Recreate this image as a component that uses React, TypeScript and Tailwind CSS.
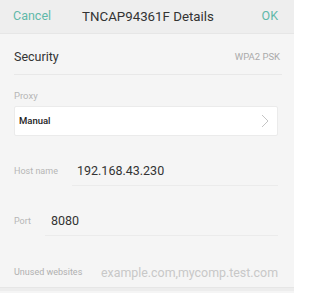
import React from "react";

export default function App() {
  return (
    <div className="w-[294px] h-[293px] overflow-hidden bg-[#f5f5f5] text-[#333]" style={{ fontFamily: "Roboto, 'Noto Sans', sans-serif" }}>
      <div className="h-[34px] bg-[#eeeeee] border-b border-[#e6e6e6] flex items-center pl-[13px] pr-[16px]">
        <span className="text-[12.5px] text-[#5fb9a9]">Cancel</span>
        <span className="text-[13.3px] text-[#333] ml-[31px]">TNCAP94361F Details</span>
        <span className="text-[12.5px] text-[#5fb9a9] ml-auto">OK</span>
      </div>
      <div className="px-[14px]">
        <div className="h-[41px] pt-[6px] flex items-center justify-between border-b border-[#e8e8e8] mr-[-2px]">
          <span className="text-[12.5px] text-[#333]">Security</span>
          <span className="text-[9.5px] text-[#aaaaaa] mr-[2px]">WPA2 PSK</span>
        </div>
        <div className="mt-[15px] text-[9.5px] leading-[12px] text-[#b5b5b5]">Proxy</div>
        <div className="mt-[4px] w-[264px] h-[30px] bg-white border border-[#ebebeb] rounded-[2px] flex items-center justify-between pl-[4px] pr-[8px]">
          <span className="text-[9.5px] font-medium text-[#222]">Manual</span>
          <svg width="8" height="14" viewBox="0 0 8 14" fill="none">
            <path d="M1 1l6 6-6 6" stroke="#c4c4c4" strokeWidth="1" />
          </svg>
        </div>
        <div className="mt-[22px] h-[28px] flex items-stretch">
          <span className="w-[58px] flex items-center text-[9px] text-[#b5b5b5]">Host name</span>
          <div className="flex-1 mr-[2px] flex items-center pl-[5px] border-b border-[#ebebeb] text-[12.5px] text-[#333]">192.168.43.230</div>
        </div>
        <div className="mt-[22px] h-[28px] flex items-stretch">
          <span className="w-[31px] flex items-center text-[9px] text-[#b5b5b5]">Port</span>
          <div className="flex-1 mr-[2px] flex items-center pl-[6px] border-b border-[#ebebeb] text-[12.5px] text-[#333]">8080</div>
        </div>
        <div className="mt-[23px] h-[28px] flex items-stretch">
          <span className="w-[87px] flex items-center text-[9px] text-[#b0b0b0] whitespace-nowrap">Unused websites</span>
          <div className="flex-1 mr-[2px] flex items-center text-[12.4px] text-[#c8c8c8] whitespace-nowrap">example.com,mycomp.test.com</div>
        </div>
      </div>
      <div className="h-[4px] bg-[#ededed] border-t border-[#e6e6e6]" />
    </div>
  );
}
